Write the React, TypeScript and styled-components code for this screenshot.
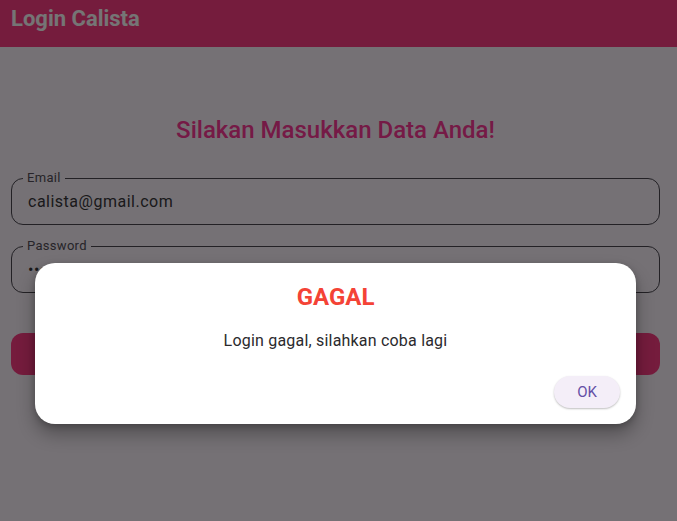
import React from "react";
import styled, { createGlobalStyle } from "styled-components";

const Global = createGlobalStyle`
  html, body { margin: 0; padding: 0; }
  body { font-family: Roboto, "Noto Sans", sans-serif; background: #fef7ff; overflow: hidden; }
  * { box-sizing: border-box; }
`;

const Screen = styled.div`
  position: relative;
  width: 677px;
  height: 521px;
  background: #fef7ff;
  overflow: hidden;
`;

const AppBar = styled.header`
  height: 47px;
  background: #ff3d86;
  display: flex;
  align-items: center;
  padding-left: 11px;
  padding-bottom: 10px;
`;

const AppTitle = styled.h1`
  margin: 0;
  color: #ffffff;
  font-size: 22px;
  font-weight: 700;
  line-height: 28px;
`;

const Body = styled.main`
  display: flex;
  flex-direction: column;
  padding: 67px 17px 0 11px;
`;

const Heading = styled.h2`
  margin: 0 0 32px;
  text-align: center;
  color: #ff3a98;
  font-size: 24px;
  font-weight: 500;
  line-height: 32px;
`;

const Field = styled.div<{ $gap: number }>`
  position: relative;
  margin-bottom: ${(p) => p.$gap}px;
  padding: 0 16px;
  height: 47px;
  border: 1.3px solid #4d4852;
  border-radius: 12px;
  display: flex;
  align-items: center;
`;

const Label = styled.span`
  position: absolute;
  top: -9px;
  left: 11px;
  padding: 0 4px;
  background: #fef7ff;
  font-size: 13px;
  color: #55505a;
  line-height: 16px;
  letter-spacing: 0.3px;
`;

const Value = styled.span`
  font-size: 16px;
  color: #3a373c;
  letter-spacing: 0.5px;
`;

const SubmitButton = styled.button`
  height: 42px;
  border: none;
  border-radius: 12px;
  background: #ff3d86;
`;

const Scrim = styled.div`
  position: absolute;
  inset: 0;
  background: rgba(0, 0, 0, 0.54);
`;

const Dialog = styled.div`
  position: absolute;
  left: 35px;
  top: 263px;
  width: 601px;
  height: 161px;
  background: #ffffff;
  border-radius: 20px;
  box-shadow: 0 10px 18px rgba(0, 0, 0, 0.3), 0 2px 6px rgba(0, 0, 0, 0.2);
  display: flex;
  flex-direction: column;
  padding: 19px 16px 16px;
`;

const DialogTitle = styled.h3`
  margin: 0;
  text-align: center;
  color: #f44336;
  font-size: 24px;
  font-weight: 700;
  line-height: 30px;
`;

const DialogText = styled.p`
  margin: 17px 0 0;
  text-align: center;
  color: #2b2a2d;
  font-size: 16px;
  line-height: 24px;
  letter-spacing: 0.2px;
`;

const Actions = styled.div`
  margin-top: auto;
  display: flex;
  justify-content: flex-end;
`;

const OkButton = styled.button`
  width: 66px;
  height: 32px;
  border: none;
  border-radius: 16px;
  background: #f4eef8;
  color: #6550a6;
  font-family: Roboto, sans-serif;
  font-size: 15px;
  box-shadow: 0 1px 2px rgba(0, 0, 0, 0.25);
`;

export default function App() {
  return (
    <>
      <Global />
      <Screen>
        <AppBar>
          <AppTitle>Login Calista</AppTitle>
        </AppBar>
        <Body>
          <Heading>Silakan Masukkan Data Anda!</Heading>
          <Field $gap={21}>
            <Label>Email</Label>
            <Value>calista@gmail.com</Value>
          </Field>
          <Field $gap={40}>
            <Label>Password</Label>
            <Value>••••••••</Value>
          </Field>
          <SubmitButton />
        </Body>
        <Scrim />
        <Dialog>
          <DialogTitle>GAGAL</DialogTitle>
          <DialogText>Login gagal, silahkan coba lagi</DialogText>
          <Actions>
            <OkButton>OK</OkButton>
          </Actions>
        </Dialog>
      </Screen>
    </>
  );
}
